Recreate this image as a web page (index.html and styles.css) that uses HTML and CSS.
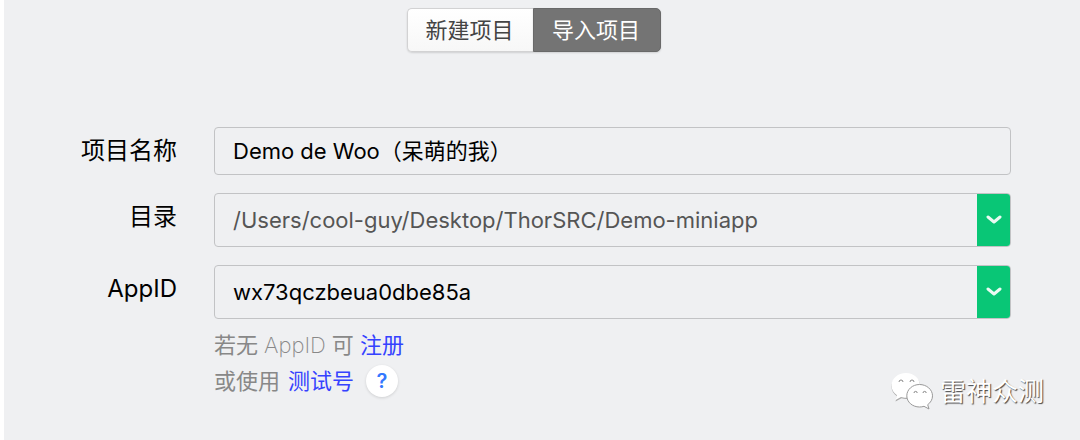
FILE: index.html
```html
<!DOCTYPE html>
<html lang="zh-CN">
<head>
<meta charset="utf-8">
<meta name="viewport" content="width=device-width, initial-scale=1">
<title>导入项目</title>
<link rel="stylesheet" href="styles.css">
</head>
<body>
<main class="page">
  <nav class="tabs">
    <button class="tab" type="button">新建项目</button>
    <button class="tab tab-active" type="button" aria-pressed="true">导入项目</button>
  </nav>
  <form class="form">
    <div class="row">
      <label class="label" for="name">项目名称</label>
      <div class="field field-name"><input class="input" id="name" type="text" value="Demo de Woo（呆萌的我）"></div>
    </div>
    <div class="row">
      <label class="label label-combo" for="dir">目录</label>
      <div class="field field-combo">
        <input class="input input-muted" id="dir" type="text" value="/Users/cool-guy/Desktop/ThorSRC/Demo-miniapp">
        <button class="drop" type="button" aria-label="选择目录"><svg class="chevron" viewBox="0 0 16 10"><path d="M2 2l6 5 6-5"/></svg></button>
      </div>
    </div>
    <div class="row">
      <label class="label label-combo" for="appid">AppID</label>
      <div class="field field-combo">
        <input class="input" id="appid" type="text" value="wx73qczbeua0dbe85a">
        <button class="drop" type="button" aria-label="选择 AppID"><svg class="chevron" viewBox="0 0 16 10"><path d="M2 2l6 5 6-5"/></svg></button>
      </div>
    </div>
  </form>
  <footer class="footer">
    <div class="hints">
      <p class="hint">若无 <span class="thin">AppID</span> 可 <a class="link" href="#register">注册</a></p>
      <p class="hint hint-wide">或使用 <a class="link" href="#test">测试号</a><button class="help" type="button">?</button></p>
    </div>
    <div class="brand">
      <svg class="brand-icon" viewBox="0 0 44 40" aria-hidden="true">
        <path class="bubble-shade" d="M16 2.500C8 2.500 1.500 8 1.500 14.500c0 4 2 7.500 5.500 9.800L5.500 29.500l6-3.300c1.500.5 3 .7 4.500.7 8 0 14.500-5.400 14.500-12.200S24 2.500 16 2.500z"/>
        <path class="bubble" d="M16 1C8 1 1.500 6.500 1.500 13.500c0 4 2 7.500 5.500 9.800L5.500 28l5.500-3c1.500.5 3 .7 5 .7 8 0 14-5.400 14-12.200S24 1 16 1z"/>
        <path class="eye" d="M9 10a2 2 0 0 1 4 0M20 10a2 2 0 0 1 4 0"/>
        <path class="bubble-front" d="M29.500 12.500c-7 0-12.700 5-12.700 11.300S22.500 35 29.500 35c1.500 0 3-.2 4.500-.7l5 2.700-1.300-4.300c3-2.200 4.800-5.300 4.800-8.900 0-6.300-6-11.300-13-11.300z"/>
        <path class="eye" d="M24 21a1.600 1.600 0 0 1 3.200 0M33 21a1.600 1.600 0 0 1 3.200 0"/>
      </svg>
      <span class="brand-name">雷神众测</span>
    </div>
  </footer>
</main>
</body>
</html>
```
FILE: styles.css
```css
* { box-sizing: border-box; }
body {
  margin: 0;
  min-height: 100vh;
  border-left: 4px solid #fff;
  background: #eff0f2;
  color: #000;
  font-family: Inter, "Noto Sans CJK SC", sans-serif;
}
button, input { font-family: inherit; }
button { padding: 0; border: 0; cursor: pointer; }
.page { padding-top: 8px; }
.tabs {
  display: flex;
  justify-content: center;
  padding-right: 16px;
  margin-bottom: 75px;
}
.tab {
  width: 126px;
  height: 44px;
  padding: 0 2px 4px 0;
  border: 1px solid #d2d2d3;
  border-right: 0;
  border-radius: 5px 0 0 5px;
  background: linear-gradient(#fff, #f7f7f7);
  box-shadow: 0 1px 2px #0002;
  color: #444;
  font-size: 22px;
}
.tab-active {
  width: 128px;
  border: 1px solid #696969;
  border-radius: 0 5px 5px 0;
  background: #747474;
  color: #fff;
}
.form { display: grid; gap: 18px; padding-right: 69px; }
.row {
  display: grid;
  grid-template-columns: 173px 1fr;
  column-gap: 37px;
  align-items: center;
}
.label { text-align: right; font-size: 24px; line-height: 36px; }
.label-combo { padding-bottom: 6px; }
.field {
  display: flex;
  overflow: hidden;
  border: 1px solid #c2c3c5;
  border-radius: 4px;
}
.field-name { height: 48px; }
.field-name .input { padding-bottom: 4px; }
.field-combo { height: 54px; }
.input {
  flex: 1;
  min-width: 0;
  padding: 0 18px;
  border: 0;
  outline: 0;
  background: transparent;
  color: #000;
  font-size: 22px;
}
.input-muted { color: #555; }
.drop {
  display: flex;
  align-items: center;
  justify-content: center;
  width: 34px;
  margin: -1px -1px -1px 0;
  background: #09c676;
}
.chevron { width: 16px; height: 10px; fill: none; stroke: #e9faf2; stroke-width: 3; stroke-linecap: round; stroke-linejoin: round; }
.footer {
  display: flex;
  justify-content: space-between;
  align-items: flex-start;
  padding: 8px 36px 0 210px;
}
.hint {
  display: flex;
  align-items: center;
  gap: 6px;
  margin: 0;
  color: #888;
  font-size: 22px;
  line-height: 36px;
}
.hint-wide { gap: 8px; }
.thin { font-weight: 200; }
.link { color: #3542ff; text-decoration: none; }
.help {
  width: 32px;
  height: 32px;
  margin-left: 4px;
  border-radius: 50%;
  background: #fff;
  box-shadow: 0 1px 3px #0002;
  color: #3478ff;
  font-size: 20px;
  font-weight: 600;
}
.brand { display: flex; align-items: center; gap: 6px; padding-top: 45px; }
.brand-icon { width: 44px; height: 40px; }
.bubble { fill: #fff; }
.bubble-shade { fill: #aaa; }
.bubble-front { fill: #fff; stroke: #999; stroke-width: 1; }
.eye { fill: none; stroke: #888; stroke-width: 1; }
.brand-name { color: #fff; font-size: 26px; line-height: 36px; text-shadow: 1px 1px 1px #444; }
```
